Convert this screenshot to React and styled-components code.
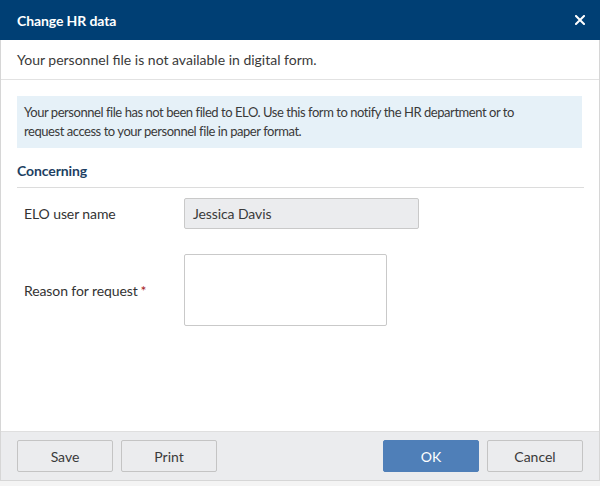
import React from "react";
import styled, { createGlobalStyle } from "styled-components";

const Global = createGlobalStyle`
  html, body { margin: 0; padding: 0; background: #f4f4f4; }
  body { font-family: Lato, "Liberation Sans", sans-serif; color: #333; }
  * { box-sizing: border-box; }
`;

const Dialog = styled.div`
  width: 600px;
  height: 481px;
  background: #fff;
  border: 1px solid #d6d6d6;
  border-top: none;
  display: flex;
  flex-direction: column;
  box-shadow: 0 2px 4px rgba(0, 0, 0, 0.12);
`;

const Header = styled.div`
  height: 40px;
  margin: 0 -1px;
  background: #003f74;
  color: #fff;
  display: flex;
  align-items: center;
  justify-content: space-between;
  padding: 0 14px 0 17px;
`;

const Title = styled.div`
  font-size: 14px;
  font-weight: 700;
  letter-spacing: -0.1px;
`;

const Close = styled.button`
  background: none;
  border: none;
  padding: 0;
  width: 12px;
  height: 12px;
  display: flex;
  align-items: center;
  justify-content: center;
  cursor: pointer;
`;

const Notice = styled.div`
  height: 40px;
  display: flex;
  align-items: center;
  padding: 0 16px;
  font-size: 14px;
  color: #3a3a3a;
  border-bottom: 1px solid #e2e2e2;
`;

const Body = styled.div`
  flex: 1;
  padding: 16px 17px 0 16px;
  display: flex;
  flex-direction: column;
`;

const Info = styled.div`
  background: #e6f1f8;
  padding: 7px 40px 7px 7px;
  font-size: 13px;
  line-height: 19px;
  letter-spacing: -0.45px;
  color: #3a3a3a;
`;

const Section = styled.div`
  margin-top: 14px;
  padding: 0 0 8px 0;
  line-height: 17px;
  border-bottom: 1px solid #dcdcdc;
  font-size: 14px;
  font-weight: 700;
  color: #1d3f63;
  letter-spacing: -0.1px;
  margin-right: -2px;
`;

const Row = styled.div`
  display: grid;
  grid-template-columns: 160px auto;
  align-items: center;
  padding-left: 7px;
  margin-top: ${(p) => p.$mt}px;
`;

const Label = styled.div`
  font-size: 14px;
  letter-spacing: -0.1px;
  color: #333;
`;

const Star = styled.span`
  color: #a61e22;
  margin-left: 3px;
`;

const ReadOnly = styled.div`
  width: 235px;
  height: 31px;
  background: #ebecee;
  border: 1px solid #c9c9c9;
  border-radius: 2px;
  display: flex;
  align-items: center;
  padding: 0 8px;
  font-size: 14px;
  letter-spacing: -0.1px;
  color: #3a3a3a;
`;

const TextArea = styled.textarea`
  width: 203px;
  height: 72px;
  border: 1px solid #c9c9c9;
  border-radius: 2px;
  resize: none;
  font-family: inherit;
  outline: none;
`;

const Footer = styled.div`
  height: 49px;
  background: #ebecee;
  border-top: 1px solid #dfdfdf;
  display: flex;
  align-items: center;
  padding: 0 16px 0 16px;
  gap: 8px;
`;

const Spacer = styled.div`
  flex: 1;
`;

const Button = styled.button`
  width: 96px;
  height: 32px;
  border-radius: 2px;
  font-family: inherit;
  font-size: 14px;
  cursor: pointer;
  border: 1px solid ${(p) => (p.$primary ? "#4f7fb8" : "#c4c4c4")};
  background: ${(p) => (p.$primary ? "#4f7fb8" : "#ebecee")};
  color: ${(p) => (p.$primary ? "#fff" : "#3a3a3a")};
`;

export default function App() {
  return (
    <>
      <Global />
      <Dialog>
        <Header>
          <Title>Change HR data</Title>
          <Close aria-label="Close">
            <svg width="10" height="10" viewBox="0 0 10 10">
              <path d="M1 1 L9 9 M9 1 L1 9" stroke="#fff" strokeWidth="2" strokeLinecap="square" />
            </svg>
          </Close>
        </Header>
        <Notice>Your personnel file is not available in digital form.</Notice>
        <Body>
          <Info>
            Your personnel file has not been filed to ELO. Use this form to notify the HR department or to
            request access to your personnel file in paper format.
          </Info>
          <Section>Concerning</Section>
          <Row $mt={10}>
            <Label>ELO user name</Label>
            <ReadOnly>Jessica Davis</ReadOnly>
          </Row>
          <Row $mt={25}>
            <Label>
              Reason for request<Star>*</Star>
            </Label>
            <TextArea />
          </Row>
        </Body>
        <Footer>
          <Button>Save</Button>
          <Button>Print</Button>
          <Spacer />
          <Button $primary>OK</Button>
          <Button>Cancel</Button>
        </Footer>
      </Dialog>
    </>
  );
}
